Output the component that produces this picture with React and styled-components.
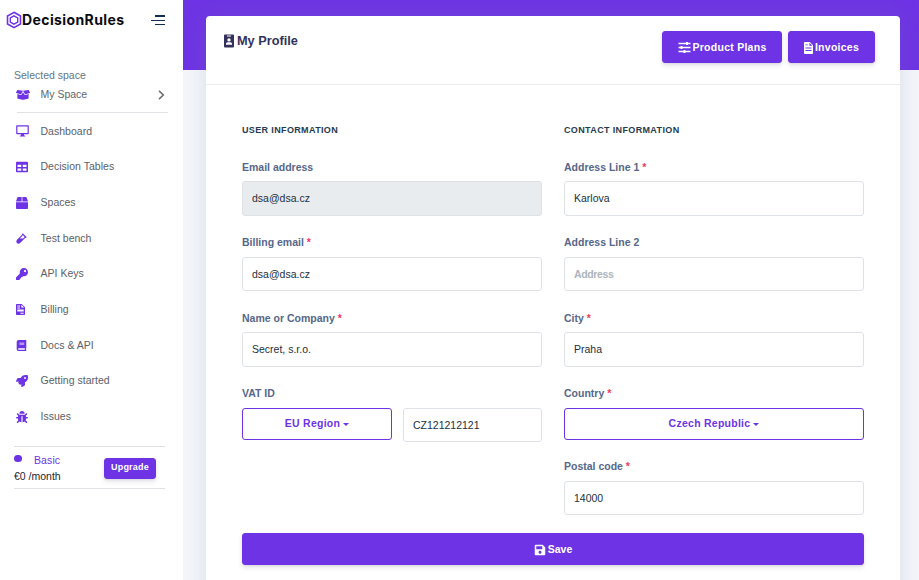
import React from "react";
import styled, { createGlobalStyle, css } from "styled-components";
import {
  FaBoxOpen, FaTable, FaBox, FaVial, FaKey, FaBook, FaRocket, FaBug, FaSave,
} from "react-icons/fa";

const purple = "#6e33e4";

const GlobalStyle = createGlobalStyle`
  *, *::before, *::after { box-sizing: border-box; }
  body {
    margin: 0;
    overflow: hidden;
    background: #f4f6fb;
    font-family: "Liberation Sans", Arial, sans-serif;
    font-size: 10.5px;
    line-height: 15.75px;
    color: #525f7f;
  }
  button, input { font: inherit; }
`;

const Page = styled.div`
  display: grid;
  grid-template-columns: 183px 1fr;
  height: 580px;
  overflow: hidden;
`;

const Sidebar = styled.aside`
  background: #fff;
`;

const Brand = styled.div`
  display: flex;
  align-items: center;
  height: 39px;
  padding: 0 18px 0 6px;
`;

const Wordmark = styled.span`
  flex: 1;
  font-family: Inter, sans-serif;
  font-weight: 700;
  font-size: 14px;
  letter-spacing: 0.4px;
  line-height: 20px;
  color: #0b0b12;
  white-space: nowrap;
`;

const Burger = styled.button`
  display: flex;
  flex-direction: column;
  align-items: flex-end;
  gap: 3px;
  padding: 0;
  border: 0;
  background: none;
`;

const BurgerLine = styled.span`
  width: ${(p) => (p.$wide ? 14 : 10)}px;
  height: ${(p) => (p.$thick ? 2 : 1)}px;
  background: #12304f;
`;

const SpaceBlock = styled.div`
  margin: 28px 15px 0 14px;
  padding-bottom: 8px;
  color: #5b6770;
`;

const SpaceCaption = styled.div`
  height: 17px;
  line-height: 17px;
  color: #5f7682;
`;

const SpaceRow = styled.div`
  display: flex;
  align-items: center;
  height: 20px;
  padding: 1px 3px 0 2px;
`;

const IconSlot = styled.span`
  display: flex;
  align-items: center;
  width: 24.5px;
  color: ${purple};
`;

const Grow = styled.span`
  flex: 1;
`;

const Rule = styled.hr`
  height: 1px;
  margin: 0 ${(p) => p.$right}px 0 ${(p) => p.$left}px;
  border: 0;
  background: #dfe1e4;
`;

const Nav = styled.nav`
  display: flex;
  flex-direction: column;
  padding: 0.6px 0 0 16px;
  height: 333px;
`;

const NavItem = styled.a`
  display: flex;
  align-items: center;
  height: 35.68px;
  letter-spacing: 0.02px;
  color: #5b6067;
`;

const Plan = styled.div`
  display: flex;
  justify-content: space-between;
  align-items: center;
  height: 41px;
  margin: 0 27px 0 14px;
`;

const PlanText = styled.div`
  padding-top: 2px;
  color: #1b2433;
`;

const PlanName = styled.div`
  display: flex;
  align-items: center;
  gap: 12px;
  height: 16px;
  color: ${purple};
  letter-spacing: 0.1px;
`;

const Dot = styled.i`
  width: 8px;
  height: 7px;
  margin-top: -4px;
  border-radius: 4px;
  background: ${purple};
`;

const Button = styled.button`
  display: flex;
  align-items: center;
  justify-content: center;
  gap: ${(p) => p.$gap ?? 2}px;
  height: 32px;
  width: ${(p) => (p.$width ? `${p.$width}px` : "100%")};
  padding: 1px 0 0;
  border: 1px solid ${purple};
  border-radius: 3px;
  background: ${purple};
  color: #fff;
  font-weight: 700;
  letter-spacing: 0.26px;
  white-space: nowrap;
  box-shadow: 0 3px 5px rgba(50, 50, 93, 0.11), 0 1px 2px rgba(0, 0, 0, 0.08);
  ${(p) => p.$tight && css`letter-spacing: 0;`}
  ${(p) => p.$small && css`
    height: 21px;
    margin-top: 1px;
    padding: 0 0 1px;
    font-size: 9px;
    letter-spacing: 0.22px;
  `}
  ${(p) => p.$outline && css`
    background: #fff;
    color: ${purple};
    box-shadow: none;
  `}
`;

const Main = styled.main`
  padding: 16px 19px 0 23px;
  background: linear-gradient(${purple} 0 70px, #f4f6fb 70px);
`;

const Card = styled.section`
  height: 600px;
  border-radius: 4px;
  background: #fff;
  box-shadow: 0 0 24px rgba(116, 132, 155, 0.2);
`;

const CardHeader = styled.header`
  display: flex;
  gap: 6px;
  height: 69px;
  padding: 15px 25px 0 18px;
  border-bottom: 1px solid #ebedf0;
`;

const Title = styled.h3`
  display: flex;
  flex: 1;
  align-items: center;
  gap: 3px;
  height: 19px;
  margin: 0;
  font-size: 12.75px;
  font-weight: 700;
  color: #32325d;
`;

const Form = styled.form`
  padding: 37px 36px 0;
`;

const Columns = styled.div`
  display: grid;
  grid-template-columns: 300px 300px;
  column-gap: 22px;
  height: 411px;
`;

const Heading = styled.h6`
  height: 15px;
  margin: 0 0 22.5px;
  padding-top: 0.5px;
  font-size: 9px;
  line-height: 15px;
  letter-spacing: 0.36px;
  font-weight: 700;
  text-transform: uppercase;
  color: #263a50;
`;

const Group = styled.div`
  height: ${(p) => p.$height || 75.5}px;
`;

const Label = styled.label`
  display: block;
  height: 16px;
  margin-bottom: 5.8px;
  line-height: 15.8px;
  font-weight: 700;
  color: #56678a;
`;

const Star = styled.span`
  color: #f5365c;
`;

const Input = styled.input`
  display: block;
  width: 100%;
  height: 34.5px;
  padding: 0 9px 1px;
  border: 1px solid #dee2e6;
  border-radius: 3px;
  outline: 0;
  background: #fff;
  color: #22303c;
  &:disabled { background: #e9ecef; }
  &::placeholder { color: #adb5bd; opacity: 1; font-weight: 700; letter-spacing: -0.35px; }
`;

const VatRow = styled.div`
  display: grid;
  grid-template-columns: 150px 139px;
  column-gap: 11px;
`;

const Caret = styled.i`
  margin-left: 1px;
  border: 3px solid transparent;
  border-top-color: currentColor;
  border-bottom: 0;
`;

const Logo = () => (
  <svg width="16" height="18" viewBox="0 0 16 18" fill="none" stroke={purple}>
    <path d="M8 1.3 14.5 5v8L8 16.7 1.5 13V5Z" strokeWidth="1.6" />
    <path d="m8 4.8 3.7 2.1v4.2L8 13.2l-3.7-2.1V6.9Z" strokeWidth="1.4" />
  </svg>
);

const Monitor = () => (
  <svg width="13" height="12" viewBox="0 0 13 12" fill={purple}>
    <path fillRule="evenodd" d="M1 .2h11q.8 0 .8.8v7.4q0 .8-.8.8H8v1.3h1.2v1H3.8v-1H5V9.2H1q-.8 0-.8-.8V1Q.2.2 1 .2Zm.4 1.2v6.5h10.2V1.4Z" />
  </svg>
);

const Chevron = () => (
  <svg width="7" height="10" viewBox="0 0 7 10" fill="none" stroke="#6d7175" strokeWidth="1.6">
    <path d="m1 .9 4.3 4.1L1 9.1" />
  </svg>
);

const Badge = () => (
  <svg width="10" height="14" viewBox="0 0 10 14" fill="currentColor">
    <path fillRule="evenodd" d="M1 .4h8q1 0 1 1V12.500q0 1-1 1H1q-1 0-1-1V1.400q0-1 1-1ZM3 1.400v1h4v-1ZM5 4.200a1.700 1.700 0 1 0 0 3.400 1.700 1.700 0 0 0 0-3.400ZM2 10.800h6v-1Q8 8.300 6.500 8.300h-3Q2 8.300 2 9.800Z" />
  </svg>
);

const Sliders = () => (
  <svg width="13" height="11" viewBox="0 0 13 11" fill="none" stroke="currentColor">
    <path d="M.5 1.500h12M.5 5.500h12M.5 9.500h12" strokeWidth="1.500" />
    <path d="M9 0v3M3.500 4v3M6.500 8v3" strokeWidth="2" />
  </svg>
);

const Invoice = ({ width = 9, height = 12 }) => (
  <svg width={width} height={height} viewBox="0 0 9 12" fill="currentColor">
    <path fillRule="evenodd" d="M.8 0h5L9 3.200v8q0 .8-.8.8H.8Q0 12 0 11.200V.8Q0 0 .8 0Zm4.600.8v2.900h2.900ZM1.500 2.500v.8h2.400v-.8Zm0 3v1h6v-1Zm0 2.500v1h6V8Z" />
  </svg>
);

const Bill = () => (
  <svg width="9" height="11" viewBox="0 0 9 11" fill="currentColor">
    <path fillRule="evenodd" d="M.7 0h5L9 3.200v7.100q0 .7-.7.700H.7Q0 11 0 10.300V.7Q0 0 .7 0Zm4.600.8v2.800h2.900ZM1.300 1.600v.9H4v-.9Zm0 2v.9H4v-.9Zm0 2v2h6.400v-2Zm3.200 3.200v.9h3.200v-.9Z" />
  </svg>
);

const links = [
  ["Dashboard", <Monitor />],
  ["Decision Tables", <FaTable size={12} />],
  ["Spaces", <FaBox size={12} />],
  ["Test bench", <FaVial size={11} />],
  ["API Keys", <FaKey size={12} />],
  ["Billing", <Bill />],
  ["Docs & API", <FaBook size={11} />],
  ["Getting started", <FaRocket size={12} />],
  ["Issues", <FaBug size={12} />],
];

function Field({ label, required, height, children, ...input }) {
  return (
    <Group $height={height}>
      <Label>{label}{required && <Star> *</Star>}</Label>
      {children || <Input {...input} />}
    </Group>
  );
}

export default function App() {
  return (
    <>
      <GlobalStyle />
      <Page>
        <Sidebar>
          <Brand>
            <Logo />
            <Wordmark>DecisionRules</Wordmark>
            <Burger aria-label="Menu">
              <BurgerLine $thick />
              <BurgerLine $wide />
              <BurgerLine />
            </Burger>
          </Brand>
          <SpaceBlock>
            <SpaceCaption>Selected space</SpaceCaption>
            <SpaceRow>
              <IconSlot><FaBoxOpen size={14} /></IconSlot>
              <Grow>My Space</Grow>
              <Chevron />
            </SpaceRow>
          </SpaceBlock>
          <Rule $left={17} $right={15} />
          <Nav>
            {links.map(([name, icon]) => (
              <NavItem key={name}><IconSlot>{icon}</IconSlot>{name}</NavItem>
            ))}
          </Nav>
          <Rule $left={14} $right={18} />
          <Plan>
            <PlanText>
              <PlanName><Dot />Basic</PlanName>
              €0 /month
            </PlanText>
            <Button $small $width={52}>Upgrade</Button>
          </Plan>
          <Rule $left={14} $right={18} />
        </Sidebar>
        <Main>
          <Card>
            <CardHeader>
              <Title><Badge />My Profile</Title>
              <Button $width={120}><Sliders />Product Plans</Button>
              <Button $width={87}><Invoice />Invoices</Button>
            </CardHeader>
            <Form>
              <Columns>
                <div>
                  <Heading>User information</Heading>
                  <Field label="Email address" defaultValue="dsa@dsa.cz" disabled />
                  <Field label="Billing email" required defaultValue="dsa@dsa.cz" />
                  <Field label="Name or Company" required defaultValue="Secret, s.r.o." />
                  <Field label="VAT ID">
                    <VatRow>
                      <Button type="button" $outline>EU Region<Caret /></Button>
                      <Input defaultValue="CZ121212121" />
                    </VatRow>
                  </Field>
                </div>
                <div>
                  <Heading>Contact information</Heading>
                  <Field label="Address Line 1" required defaultValue="Karlova" />
                  <Field label="Address Line 2" placeholder="Address" />
                  <Field label="City" required defaultValue="Praha" />
                  <Field label="Country" required height={73.2}>
                    <Button type="button" $outline>Czech Republic<Caret /></Button>
                  </Field>
                  <Field label="Postal code" required defaultValue="14000" />
                </div>
              </Columns>
              <Button type="button" $tight $gap={2}><FaSave size={12} />Save</Button>
            </Form>
          </Card>
        </Main>
      </Page>
    </>
  );
}
